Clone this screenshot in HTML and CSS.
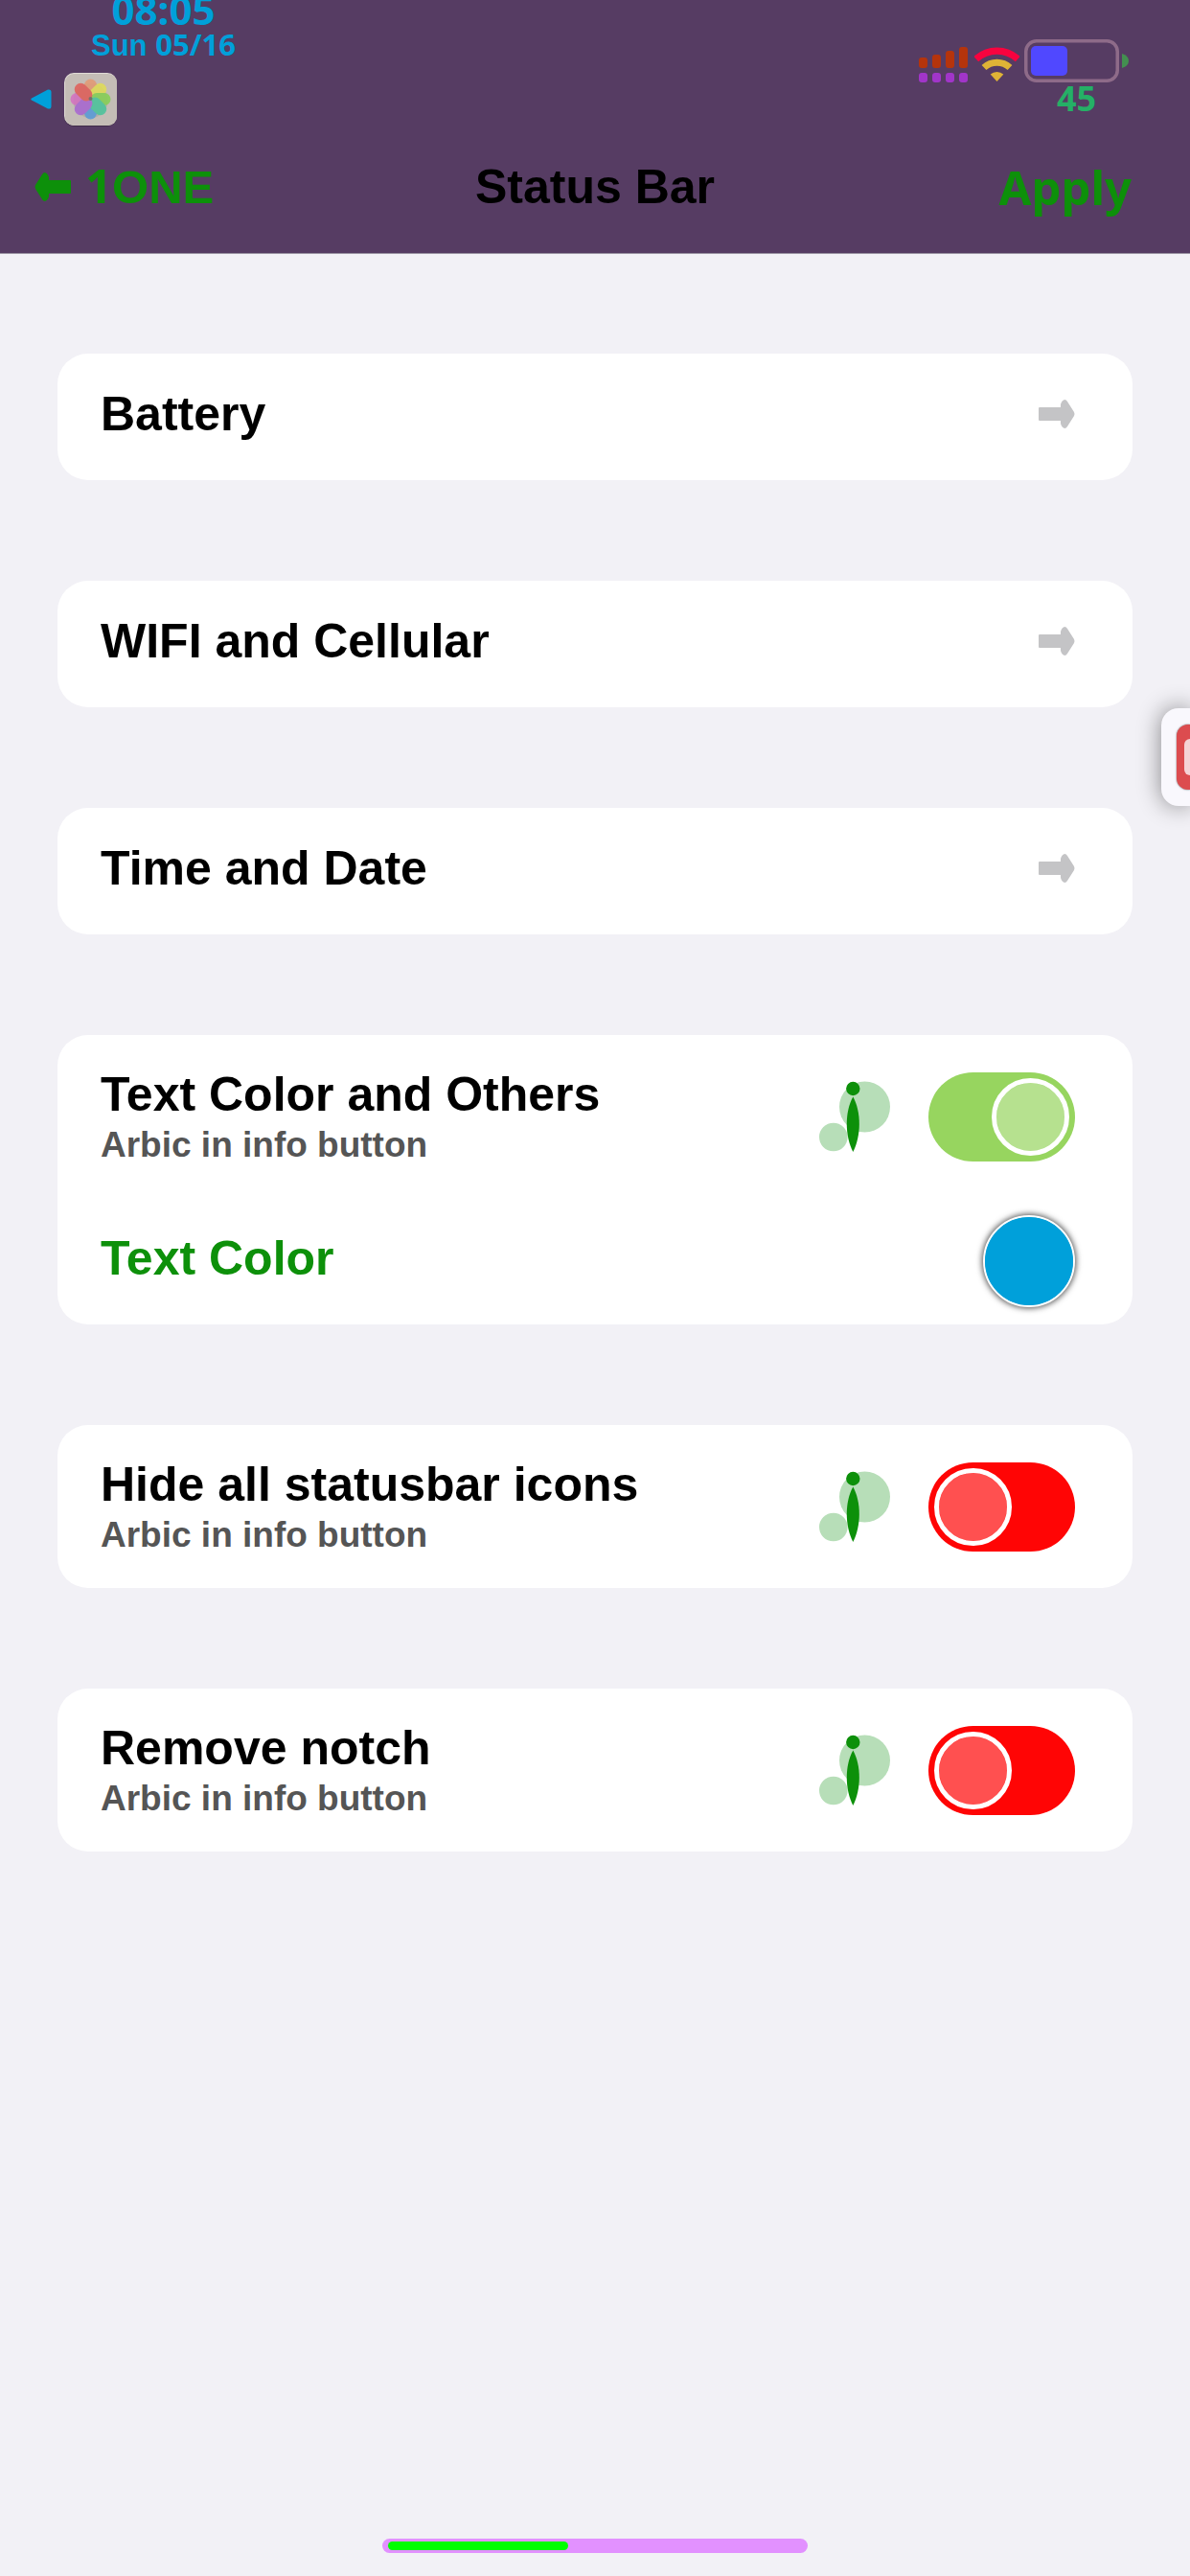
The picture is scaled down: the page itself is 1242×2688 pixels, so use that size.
FILE: index.html
```html
<!DOCTYPE html>
<html lang="en">
<head>
<meta charset="utf-8">
<meta name="viewport" content="width=device-width, initial-scale=1">
<title>Status Bar</title>
<link rel="stylesheet" href="styles.css">
</head>
<body>
<svg class="sprite" aria-hidden="true">
  <symbol id="arrow" viewBox="0 0 38 30">
    <path d="M1 8H23V5Q24 1 27 0Q29 0 30 2L37 13Q38 15 37 17L30 28Q29 30 27 30Q24 29 23 25V22H1Q0 22 0 21V9Q0 8 1 8Z"/>
  </symbol>
  <symbol id="info" viewBox="0 0 74 74">
    <g fill="#b7deb8"><circle cx="47.5" cy="27" r="26.5"/><circle cx="14.8" cy="58.5" r="14.8"/></g>
    <g fill="#0d900a"><circle cx="35.3" cy="8" r="7.2"/><path d="M35.3 16.500C44.000 32 44.000 57 35.300 74C26.600 57 26.600 32 35.300 16.500Z"/></g>
  </symbol>
</svg>

<header class="header">
  <div class="status">
    <div class="status-left">
      <div class="clock">
        <time class="time">08:05</time>
        <div class="date">Sun <span class="digits">05/16</span></div>
      </div>
      <div class="crumb">
        <svg width="22" height="22" viewBox="0 0 22 22" aria-hidden="true"><path d="M1 9.500L18 .5Q21.500 0 21.500 3V18Q21.500 21 18 20.500L1 11.500Q-.5 10.500 1 9.500Z" fill="#00a0da"/></svg>
        <svg width="55" height="56" viewBox="0 0 55 56" aria-hidden="true">
          <rect x="0" y="1" width="55" height="55" rx="10" fill="#3f2c49"/>
          <rect x="0" y="0" width="55" height="55" rx="10" fill="#e0dbd5"/>
          <rect x="1" y="1" width="54" height="54" rx="9" fill="#c4bdb6"/>
          <circle cx="27.500" cy="29" r="18" fill="#a9a29c" opacity=".6"/>
          <g opacity=".88">
            <rect x="21" y="6.500" width="13" height="21" rx="6.500" fill="#e39a75"/>
            <rect x="21" y="6.500" width="13" height="21" rx="6.500" fill="#e0dc58" transform="rotate(45 27.500 27.500)"/>
            <rect x="21" y="6.500" width="13" height="21" rx="6.500" fill="#86d056" transform="rotate(90 27.500 27.500)"/>
            <rect x="21" y="6.500" width="13" height="21" rx="6.500" fill="#5a9bd8" transform="rotate(180 27.500 27.500)"/>
            <rect x="21" y="6.500" width="13" height="21" rx="6.500" fill="#4cc49c" transform="rotate(135 27.500 27.500)"/>
            <rect x="21" y="6.500" width="13" height="21" rx="6.500" fill="#d866c4" transform="rotate(270 27.500 27.500)" opacity=".85"/>
            <rect x="21" y="6.500" width="13" height="21" rx="6.500" fill="#a968d2" transform="rotate(225 27.500 27.500)"/>
            <rect x="21" y="6.500" width="13" height="21" rx="6.500" fill="#e0605a" transform="rotate(315 27.500 27.500)"/>
          </g>
          <circle cx="27.500" cy="27" r="2" fill="#777168"/>
        </svg>
      </div>
    </div>
    <div class="status-right">
      <svg class="signal" width="51" height="37" viewBox="0 0 51 37" aria-hidden="true">
        <g fill="#b5340c"><rect x="0" y="11" width="9" height="11" rx="3"/><rect x="14" y="8" width="9" height="14" rx="3"/><rect x="28" y="4" width="9" height="18" rx="3"/><rect x="42" y="0" width="9" height="22" rx="3"/></g>
        <g fill="#a135c9"><rect x="0" y="27" width="9" height="10" rx="3"/><rect x="14" y="27" width="9" height="10" rx="3"/><rect x="28" y="27" width="9" height="10" rx="3"/><rect x="42" y="27" width="9" height="10" rx="3"/></g>
      </svg>
      <svg class="wifi" width="47" height="37" viewBox="0 0 47 37" fill="none" aria-hidden="true">
        <path d="M1.700 12.600A32 32 0 0 1 45.300 12.600" stroke="#f8033f" stroke-width="7.300"/>
        <path d="M10 21.500A19.800 19.800 0 0 1 37 21.500" stroke="#dfb336" stroke-width="7"/>
        <path d="M16.700 28.500A10.300 10.300 0 0 1 30.300 28.500L23.500 36Z" fill="#dfb336"/>
      </svg>
      <svg class="battery" width="109" height="45" viewBox="0 0 109 45" aria-hidden="true">
        <rect x="1.750" y="1.750" width="95.500" height="41.500" rx="11" fill="none" stroke="#8e6b89" stroke-width="3.500"/>
        <rect x="7" y="7" width="38" height="31" rx="5" fill="#5048ff"/>
        <path d="M102 15Q109 17 109 22.500Q109 28 102 30Z" fill="#438f50"/>
      </svg>
      <span class="percent">45</span>
    </div>
  </div>
  <nav class="nav">
    <a class="back" href="#back">
      <svg class="back-arrow" width="38" height="30" aria-hidden="true"><use href="#arrow"/></svg>
      <span><span class="digits">1</span>ONE</span>
    </a>
    <h1 class="title">Status Bar</h1>
    <button class="apply" type="button">Apply</button>
  </nav>
</header>

<main class="list">
  <a class="card row link" href="#battery"><span class="label">Battery</span><svg class="chevron" width="38" height="30" aria-hidden="true"><use href="#arrow"/></svg></a>
  <a class="card row link" href="#wifi"><span class="label">WIFI and Cellular</span><svg class="chevron" width="38" height="30" aria-hidden="true"><use href="#arrow"/></svg></a>
  <a class="card row link" href="#time"><span class="label">Time and Date</span><svg class="chevron" width="38" height="30" aria-hidden="true"><use href="#arrow"/></svg></a>

  <section class="card">
    <div class="row tall">
      <label class="text" for="colors"><span class="label">Text Color and Others</span><span class="sub">Arbic in info button</span></label>
      <button class="info" type="button" aria-label="Info"><svg width="74" height="74"><use href="#info"/></svg></button>
      <input class="switch" id="colors" type="checkbox" role="switch" checked>
    </div>
    <div class="row">
      <label class="label accent" for="well">Text Color</label>
      <input class="well" id="well" type="color" value="#00a0da">
    </div>
  </section>

  <section class="card row tall">
    <label class="text" for="hide"><span class="label">Hide all statusbar icons</span><span class="sub">Arbic in info button</span></label>
    <button class="info" type="button" aria-label="Info"><svg width="74" height="74"><use href="#info"/></svg></button>
    <input class="switch" id="hide" type="checkbox" role="switch">
  </section>

  <section class="card row tall">
    <label class="text" for="notch"><span class="label">Remove notch</span><span class="sub">Arbic in info button</span></label>
    <button class="info" type="button" aria-label="Info"><svg width="74" height="74"><use href="#info"/></svg></button>
    <input class="switch" id="notch" type="checkbox" role="switch">
  </section>
</main>

<button class="floating" type="button" aria-label="Recorder"><span class="floating-icon"><span class="floating-glyph"></span></span></button>

<footer class="home"><div class="home-bar"><div class="home-fill"></div></div></footer>
</body>
</html>
```
FILE: styles.css
```css
*, *::before { box-sizing: border-box; }

body {
  margin: 0;
  min-height: 100vh;
  display: flex;
  flex-direction: column;
  position: relative;
  overflow-x: hidden;
  background: #f2f1f6;
  color: #000;
  font-family: "Liberation Sans", Arial, sans-serif;
  font-weight: 700;
  font-size: 50px;
}

a { color: inherit; text-decoration: none; }

button {
  padding: 0;
  border: 0;
  background: none;
  font: inherit;
  color: inherit;
}

svg { display: block; flex: none; }

.sprite { position: absolute; width: 0; height: 0; }

.digits { font-family: "Noto Sans", sans-serif; line-height: 1; }

/* Header */
.header {
  background: #563c63;
  border-bottom: 1px solid #9b94a3;
}

.status {
  display: flex;
  justify-content: space-between;
  min-height: 132px;
  padding: 0 64px 0 32px;
  color: #00a0da;
}

.status-left {
  display: flex;
  flex-direction: column;
  align-items: flex-start;
}

.clock {
  margin-left: 63px;
  text-align: center;
}

.time {
  display: block;
  font: 700 42px/20px "Noto Sans", sans-serif;
}

.date { font-size: 31px; line-height: 56px; }
.date .digits { font-size: 31px; }

.crumb {
  display: flex;
  align-items: center;
  gap: 13px;
}

.status-right {
  display: grid;
  grid-template-columns: auto auto auto;
  align-content: start;
  align-items: end;
  padding-top: 41px;
}

.signal { margin-right: 7px; }
.wifi { margin-right: 5px; }

.percent {
  grid-column: 3;
  text-align: center;
  font: 700 36px/34px "Noto Sans", sans-serif;
  color: #25b066;
}

.nav {
  display: grid;
  grid-template-columns: 1fr auto 1fr;
  align-items: center;
  min-height: 132px;
  padding: 0 36px 6px;
}

.back {
  display: flex;
  align-items: center;
  gap: 15px;
  font-size: 49px;
  line-height: 60px;
  color: #0d900a;
}

.back-arrow { transform: scaleX(-1); fill: #0d900a; }

.title { margin: 0; font-size: 50px; line-height: 60px; }

.apply {
  justify-self: end;
  margin-right: 25px;
  font: 700 49px/60px "Noto Sans", sans-serif;
  color: #0d900a;
}

/* Settings list */
.list {
  flex: 1;
  display: flex;
  flex-direction: column;
  gap: 105px;
  padding: 104px 60px;
}

.card {
  background: #fff;
  border-radius: 32px;
}

.row {
  display: flex;
  align-items: center;
  justify-content: space-between;
  min-height: 132px;
  padding: 0 60px 0 45px;
}

.tall { min-height: 170px; }

.link { padding-bottom: 6px; }

.label { line-height: 60px; }

.accent { padding-bottom: 6px; color: #0d900a; }

.text { display: flex; flex-direction: column; flex: 1; }

.sub { font-size: 37px; line-height: 46px; color: #555; }

.chevron { fill: #c4c4c6; }

.info { margin-right: 40px; }

.switch {
  appearance: none;
  flex: none;
  display: flex;
  width: 153px;
  height: 93px;
  margin: 0;
  padding: 6px;
  border-radius: 47px;
  background: #ff0505;
}

.switch::before {
  content: "";
  width: 81px;
  height: 81px;
  border: 5px solid #fff;
  border-radius: 50%;
  background: rgba(255, 255, 255, 0.3);
  background-clip: padding-box;
}

.switch:checked { justify-content: flex-end; background: #97d55f; }

.well {
  appearance: none;
  width: 96px;
  height: 96px;
  padding: 0;
  border: 2px solid #fff;
  border-radius: 50%;
  background: #00a0da;
  box-shadow: 0 0 6px 1px rgba(0, 0, 0, 0.7);
}

.well::-webkit-color-swatch-wrapper { padding: 0; }
.well::-webkit-color-swatch { border: 0; border-radius: 50%; }

/* Floating button docked at the screen edge */
.floating {
  position: absolute;
  top: 739px;
  right: 0;
  display: flex;
  align-items: center;
  justify-content: flex-end;
  width: 30px;
  height: 102px;
  border-radius: 18px 0 0 18px;
  background: #f9f8fd;
  box-shadow: 0 0 24px rgba(0, 0, 0, 0.45);
}

.floating-icon {
  display: flex;
  align-items: center;
  justify-content: flex-end;
  width: 14px;
  height: 68px;
  border-radius: 12px 0 0 12px;
  background: #dc4c4f;
  box-shadow: 0 0 2px rgba(0, 0, 0, 0.6);
}

.floating-glyph {
  width: 6px;
  height: 38px;
  border-radius: 6px 0 0 6px;
  background: #f5d3d6;
}

/* Home indicator */
.home {
  display: flex;
  justify-content: center;
  padding-bottom: 24px;
}

.home-bar {
  width: 444px;
  padding: 3px 6px;
  border-radius: 8px;
  background: #e291ff;
}

.home-fill {
  width: 188px;
  height: 9px;
  border-radius: 5px;
  background: #0f0;
}
```
